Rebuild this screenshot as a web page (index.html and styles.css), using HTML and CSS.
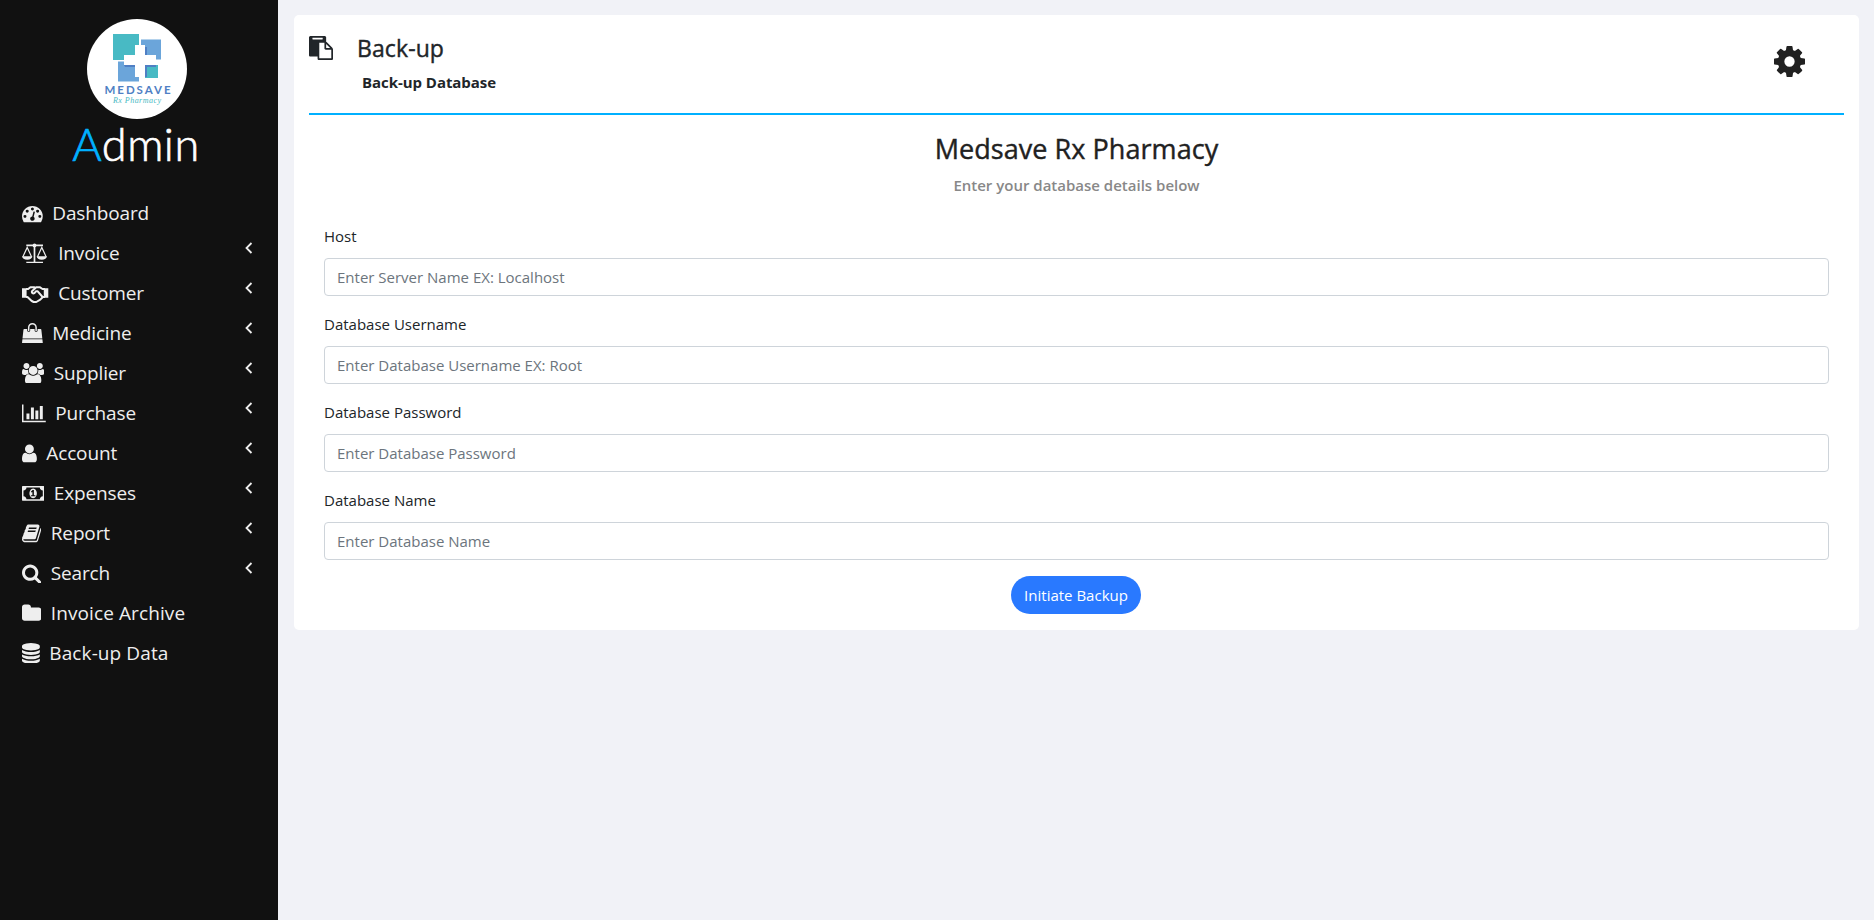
FILE: index.html
```html
<!DOCTYPE html>
<html lang="en">
<head>
<meta charset="utf-8">
<title>Back-up</title>
<link rel="stylesheet" href="styles.css">
</head>
<body>
<div class="app">
  <nav class="sidebar">
    <div class="brand">
      <svg class="logo" viewBox="0 0 100 100">
        <circle cx="50" cy="50" r="50" fill="#fff"/>
        <path fill="#48bac4" d="M26 15h26v26H26zM58 46h13v13H58z"/>
        <path fill="#6ba5da" d="M54 20.500h20v20H54zM31 42.500h21v20H31z"/>
        <path fill="#4f7fc4" d="M48 28h12v10h-2zM37 46h15v2H38zM58 46h11v2H60v10h-2z"/>
        <path fill="#fff" d="M48 26h10v10h11v10H58v12H48V46H37V36h11z"/>
        <text class="logo-name" x="17.500" y="74.500" textLength="66">MEDSAVE</text>
        <text class="logo-sub" x="26" y="84" textLength="48">Rx Pharmacy</text>
      </svg>
      <h1 class="role"><span class="role-initial">A</span>dmin</h1>
    </div>
    <ul class="menu">
      <li class="item"><svg class="icon" viewBox="0 0 1792 1792"><path d="M384 1152q0-53-37.500-90.500t-90.500-37.500-90.500 37.500-37.500 90.500 37.500 90.500 90.500 37.500 90.500-37.500 37.500-90.500zm192-448q0-53-37.500-90.500t-90.500-37.500-90.500 37.500-37.500 90.500 37.500 90.500 90.500 37.500 90.500-37.500 37.500-90.500zm428 481l101-382q6-26-7.500-48.500t-38.500-29.500-48 6.500-30 39.500l-101 382q-60 5-107 43.500t-63 98.500q-20 77 20 146t117 89 146-20 89-117q16-60-6-117t-72-91zm660-33q0-53-37.500-90.500t-90.500-37.500-90.500 37.500-37.500 90.500 37.500 90.500 90.500 37.500 90.500-37.500 37.500-90.500zm-640-640q0-53-37.500-90.500t-90.500-37.500-90.500 37.500-37.500 90.500 37.500 90.500 90.500 37.500 90.500-37.500 37.500-90.500zm448 192q0-53-37.500-90.500t-90.500-37.500-90.500 37.500-37.500 90.500 37.500 90.500 90.500 37.500 90.500-37.500 37.500-90.500zm320 448q0 261-141 483-19 29-54 29h-1402q-35 0-54-29-141-221-141-483 0-182 71-348t191-286 286-191 348-71 348 71 286 191 191 286 71 348z"/></svg><span>Dashboard</span></li>
      <li class="item"><svg class="icon" viewBox="0 0 26.700 20.800"><g fill="none" stroke="#eee" stroke-width="1.700"><path d="M4.300 2.400H21M12.500 2v17.500M4.300 19.600H21"/><path stroke-width="1.200" d="M.9 13.700 5.200 4.500l4.300 9.200M15.500 13.700l4.300-9.200 4.300 9.200"/></g><circle cx="12.500" cy="2.400" r="1.900"/><path d="M0 13.300h10.400q-.6 3.400-5.200 3.400T0 13.300zM14.600 13.300H25q-.6 3.400-5.200 3.400t-5.200-3.400z"/></svg><span>Invoice</span><svg class="caret" viewBox="0 0 8 12"><path d="M6.500 1 1.500 6l5 5"/></svg></li>
      <li class="item"><svg class="icon" viewBox="0 0 26.700 20.800"><path d="M0 5.200h4.600v9.500H0zM21.800 5.200h4.500v9.500h-4.500z"/><g fill="none" stroke="#eee" stroke-width="2" stroke-linejoin="round"><path d="M4 6h2.200l2.200-1.800h4l1 .8M4 14h1.500l4.200 4 2 1h2.600l4-2.400 2.500-2.600H23M23 6h-2.500l-2.800-1.800h-3.500L10 8.200q-.6 1.600 1 2.200 1.600.2 3-2.200h1.500l4.700 5.300"/></g></svg><span>Customer</span><svg class="caret" viewBox="0 0 8 12"><path d="M6.500 1 1.500 6l5 5"/></svg></li>
      <li class="item"><svg class="icon" viewBox="0 0 1792 1792"><path d="M1757 1408l35 313q3 28-16 50-19 21-48 21h-1664q-29 0-48-21-19-22-16-50l35-313h1722zm-93-839l86 775h-1708l86-775q3-24 21-40.500t43-16.500h256v128q0 53 37.500 90.500t90.500 37.500 90.500-37.500 37.500-90.500v-128h384v128q0 53 37.500 90.500t90.500 37.500 90.500-37.500 37.500-90.500v-128h256q25 0 43 16.500t21 40.500zm-384-185v256q0 26-19 45t-45 19-45-19-19-45v-256q0-106-75-181t-181-75-181 75-75 181v256q0 26-19 45t-45 19-45-19-19-45v-256q0-159 112.500-271.500t271.500-112.500 271.500 112.500 112.500 271.500z"/></svg><span>Medicine</span><svg class="caret" viewBox="0 0 8 12"><path d="M6.500 1 1.500 6l5 5"/></svg></li>
      <li class="item"><svg class="icon" viewBox="0 0 1920 1792"><path d="M593 896q-162 5-265 128h-134q-82 0-138-40.500t-56-118.500q0-353 124-353 6 0 43.500 21t97.500 42.500 119 21.500q67 0 133-23-5 37-5 66 0 139 81 256zm1071 637q0 120-73 189.500t-194 69.500h-874q-121 0-194-69.500t-73-189.500q0-53 3.500-103.500t14-109 26.500-108.500 43-97.500 62-81 85.500-53.500 111.500-20q10 0 43 21.500t73 48 107 48 135 21.500 135-21.500 107-48 73-48 43-21.500q61 0 111.500 20t85.500 53.500 62 81 43 97.500 26.500 108.500 14 109 3.500 103.500zm-1024-1277q0 106-75 181t-181 75-181-75-75-181 75-181 181-75 181 75 75 181zm704 384q0 159-112.500 271.500t-271.500 112.500-271.500-112.500-112.500-271.500 112.500-271.500 271.500-112.500 271.500 112.500 112.500 271.500zm576 225q0 78-56 118.500t-138 40.500h-134q-103-123-265-128 81-117 81-256 0-29-5-66 66 23 133 23 59 0 119-21.500t97.500-42.500 43.500-21q124 0 124 353zm-128-609q0 106-75 181t-181 75-181-75-75-181 75-181 181-75 181 75 75 181z"/></svg><span>Supplier</span><svg class="caret" viewBox="0 0 8 12"><path d="M6.500 1 1.500 6l5 5"/></svg></li>
      <li class="item"><svg class="icon" viewBox="0 0 2048 1792"><path d="M640 896v512h-256v-512h256zm384-512v1024h-256v-1024h256zm1024 1152v128h-2048v-1536h128v1408h1920zm-640-896v768h-256v-768h256zm384-384v1152h-256v-1152h256z"/></svg><span>Purchase</span><svg class="caret" viewBox="0 0 8 12"><path d="M6.500 1 1.500 6l5 5"/></svg></li>
      <li class="item"><svg class="icon" viewBox="256 0 1280 1792"><path d="M1536 1399q0 109-62.500 187t-150.500 78h-854q-88 0-150.500-78t-62.500-187q0-85 8.500-160.500t31.500-152 58.500-131 94-89 134.500-34.500q131 128 313 128t313-128q76 0 134.500 34.500t94 89 58.500 131 31.500 152 8.500 160.500zm-256-887q0 159-112.500 271.500t-271.500 112.500-271.500-112.500-112.500-271.500 112.500-271.500 271.500-112.500 271.500 112.500 112.500 271.500z"/></svg><span>Account</span><svg class="caret" viewBox="0 0 8 12"><path d="M6.500 1 1.500 6l5 5"/></svg></li>
      <li class="item"><svg class="icon" viewBox="0 0 1920 1792"><path d="M768 1152h384v-96h-128v-448h-114l-148 137 77 80q42-37 55-57h2v288h-128v96zm512-256q0 70-21 142t-59.500 134-101.500 101-138 39-138-39-101.500-101-59.500-134-21-142 21-142 59.500-134 101.500-101 138-39 138 39 101.500 101 59.500 134 21 142zm512 256v-512q-106 0-181-75t-75-181h-1152q0 106-75 181t-181 75v512q106 0 181 75t75 181h1152q0-106 75-181t181-75zm128-832v1152q0 26-19 45t-45 19h-1792q-26 0-45-19t-19-45v-1152q0-26 19-45t45-19h1792q26 0 45 19t19 45z"/></svg><span>Expenses</span><svg class="caret" viewBox="0 0 8 12"><path d="M6.500 1 1.500 6l5 5"/></svg></li>
      <li class="item"><svg class="icon" viewBox="64 0 1664 1792"><path d="M1703 478q40 57 18 129l-275 906q-19 64-76.500 107.500t-122.500 43.500h-923q-77 0-148.500-53.500t-99.500-131.500q-24-67-2-127 0-4 3-27t4-37q1-8-3-21.500t-3-19.500q2-11 8-21t16.500-23.500 16.500-23.500q23-38 45-91.500t30-91.500q3-10 .5-30t-.5-28q3-11 17-28t17-23q21-36 42-92t25-90q1-9-2.500-32t.5-28q4-13 22-30.500t22-22.500q19-26 42.500-84.500t27.500-96.500q1-8-3-25.500t-2-26.500q2-8 9-18t18-23 17-21q8-12 16.500-30.500t15-35 16-36 19.500-32 26.500-23.500 36-11.500 47.500 5.500l-1 3q38-9 51-9h761q74 0 114 56t18 130l-274 906q-36 119-71.500 153.500t-128.500 34.500h-869q-27 0-38 15-11 16-1 43 24 70 144 70h923q29 0 56-15.500t35-41.500l300-987q7-22 5-57 38 15 59 43zm-1064 2q-4 13 2 22.500t20 9.500h608q13 0 25.500-9.500t16.500-22.500l21-64q4-13-2-22.500t-20-9.500h-608q-13 0-25.500 9.500t-16.500 22.500zm-83 256q-4 13 2 22.500t20 9.500h608q13 0 25.500-9.500t16.500-22.500l21-64q4-13-2-22.500t-20-9.500h-608q-13 0-25.500 9.500t-16.500 22.500z"/></svg><span>Report</span><svg class="caret" viewBox="0 0 8 12"><path d="M6.500 1 1.500 6l5 5"/></svg></li>
      <li class="item"><svg class="icon" viewBox="64 0 1664 1792"><path d="M1216 832q0-185-131.500-316.500t-316.500-131.500-316.500 131.500-131.500 316.500 131.500 316.500 316.500 131.500 316.500-131.500 131.500-316.500zm512 832q0 52-38 90t-90 38q-54 0-90-38l-343-342q-179 124-399 124-143 0-273.500-55.500t-225-150-150-225-55.500-273.500 55.500-273.500 150-225 225-150 273.500-55.500 273.500 55.500 225 150 150 225 55.500 273.500q0 220-124 399l343 343q37 37 37 90z"/></svg><span>Search</span><svg class="caret" viewBox="0 0 8 12"><path d="M6.500 1 1.500 6l5 5"/></svg></li>
      <li class="item"><svg class="icon" viewBox="64 0 1664 1792"><path d="M1728 608v704q0 92-66 158t-158 66h-1216q-92 0-158-66t-66-158v-960q0-92 66-158t158-66h320q92 0 158 66t66 158v32h672q92 0 158 66t66 158z"/></svg><span class="wide">Invoice Archive</span></li>
      <li class="item"><svg class="icon" viewBox="128 0 1536 1792"><path d="M896 768q237 0 443-43t325-127v170q0 69-103 128t-280 93.500-385 34.500-385-34.500-280-93.500-103-128v-170q119 84 325 127t443 43zm0 768q237 0 443-43t325-127v170q0 69-103 128t-280 93.500-385 34.500-385-34.500-280-93.500-103-128v-170q119 84 325 127t443 43zm0-384q237 0 443-43t325-127v170q0 69-103 128t-280 93.500-385 34.500-385-34.500-280-93.500-103-128v-170q119 84 325 127t443 43zm0-1152q208 0 385 34.500t280 93.500 103 128v128q0 69-103 128t-280 93.500-385 34.500-385-34.500-280-93.500-103-128v-128q0-69 103-128t280-93.500 385-34.500z"/></svg><span class="wide">Back-up Data</span></li>
    </ul>
  </nav>
  <main class="content">
    <section class="card">
      <header class="card-head">
        <svg class="paste" viewBox="0 0 1792 1792"><path d="M768 1664h896v-640h-416q-40 0-68-28t-28-68v-416h-384v1152zm256-1440v-64q0-13-9.500-22.500t-22.500-9.500h-704q-13 0-22.500 9.500t-9.500 22.500v64q0 13 9.500 22.500t22.500 9.500h704q13 0 22.500-9.500t9.500-22.500zm256 672h299l-299-299v299zm512 128v672q0 40-28 68t-68 28h-960q-40 0-68-28t-28-68v-160h-544q-40 0-68-28t-28-68v-1344q0-40 28-68t68-28h1088q40 0 68 28t28 68v328q21 13 36 28l408 408q28 28 48 76t20 88z"/></svg>
        <div class="head-text">
          <h2 class="title">Back-up</h2>
          <p class="subtitle">Back-up Database</p>
        </div>
        <svg class="cog" viewBox="128 128 1536 1536"><path d="M1152 896q0-106-75-181t-181-75-181 75-75 181 75 181 181 75 181-75 75-181zm512-109v222q0 12-8 23t-20 13l-185 28q-19 54-39 91 35 50 107 138 10 12 10 25t-9 23q-27 37-99 108t-94 71q-12 0-26-9l-138-108q-44 23-91 38-16 136-29 186-7 28-36 28h-222q-14 0-24.500-8.500t-11.500-21.500l-28-184q-49-16-90-37l-141 107q-10 9-25 9-14 0-25-11-126-114-165-168-7-10-7-23 0-12 8-23 15-21 51-66.500t54-70.500q-27-50-41-99l-183-27q-13-2-21-12.500t-8-23.500v-222q0-12 8-23t19-13l186-28q14-46 39-92-40-57-107-138-10-12-10-24 0-10 9-23 26-36 98.500-107.500t94.500-71.500q13 0 26 10l138 107q44-23 91-38 16-136 29-186 7-28 36-28h222q14 0 24.500 8.500t11.500 21.500l28 184q49 16 90 37l142-107q9-9 24-9 13 0 25 10 129 119 165 170 7 8 7 22 0 12-8 23-15 21-51 66.500t-54 70.500q26 50 41 98l183 28q13 2 21 12.500t8 23.500z"/></svg>
      </header>
      <h3 class="form-title">Medsave Rx Pharmacy</h3>
      <p class="form-hint">Enter your database details below</p>
      <form class="form">
        <label class="field"><span class="label">Host</span><input class="input" type="text" placeholder="Enter Server Name EX: Localhost"></label>
        <label class="field"><span class="label">Database Username</span><input class="input" type="text" placeholder="Enter Database Username EX: Root"></label>
        <label class="field"><span class="label">Database Password</span><input class="input" type="password" placeholder="Enter Database Password"></label>
        <label class="field"><span class="label">Database Name</span><input class="input" type="text" placeholder="Enter Database Name"></label>
        <button class="submit" type="button">Initiate Backup</button>
      </form>
    </section>
  </main>
</div>
</body>
</html>
```
FILE: styles.css
```css
* { box-sizing: border-box; }
body { margin: 0; font-family: "Open Sans", "Noto Sans", sans-serif; font-size: 15px; line-height: 24px; color: #212529; background: #f1f2f7; }
h1, h2, h3, p, ul { margin: 0; padding: 0; }
.app { display: flex; min-height: 920px; }
.sidebar { width: 278px; flex: none; background: #111; color: #eee; }
.brand { display: flex; flex-direction: column; align-items: center; height: 193px; padding: 19px 4px 0 0; }
.logo { width: 100px; height: 100px; flex: none; }
.logo-name { font: 700 11.500px Lato, sans-serif; fill: #4f7fc4; }
.logo-sub { font: italic 8px "Liberation Serif", serif; fill: #48bac4; }
.role { font: 300 45px/50px Lato, sans-serif; color: #fff; letter-spacing: .5px; padding-right: 2px; -webkit-text-stroke: .7px; }
.role-initial { color: #00b0ff; }
.menu { list-style: none; }
.item { display: flex; align-items: center; height: 40px; padding: 0 25px 0 22px; font-size: 19px; letter-spacing: -.15px; }
.item span { margin-left: 9.500px; }
.item .wide { letter-spacing: .1px; }
.icon { height: 20.800px; width: auto; fill: #eee; flex: none; }
.caret { width: 8px; height: 12px; margin: 0 0 11px auto; fill: none; stroke: #eee; stroke-width: 1.800; }
.content { flex: 1; padding: 15px 15px 0 16px; }
.card { height: 615px; padding: 0 15px; background: #fff; border-radius: 5px; }
.card-head { display: flex; height: 100px; border-bottom: 2px solid #00b0ff; padding-top: 18px; }
.paste { width: 24px; height: 24px; margin: 3px 24px 0 0; fill: #212529; }
.title { font-size: 23px; font-weight: 500; line-height: 30px; letter-spacing: .1px; -webkit-text-stroke: .4px; }
.subtitle { margin: 7px 0 0 5px; font-weight: 700; line-height: 24px; letter-spacing: -.05px; }
.cog { width: 31px; height: 31px; margin: 13px 39px 0 auto; fill: #212121; }
.form-title { margin-top: 15px; text-align: center; font-size: 27px; font-weight: 500; line-height: 38px; color: #212121; -webkit-text-stroke: .4px; letter-spacing: .05px; }
.form-hint { margin-top: 5px; text-align: center; font-weight: 600; color: #888; }
.form { display: flex; flex-direction: column; padding: 27px 15px 0; }
.field { display: flex; flex-direction: column; gap: 10px; margin-bottom: 16px; }
.input { height: 38px; padding: 0 12px; border: 1px solid #ced4da; border-radius: 4px; font: inherit; background: #fff; }
.input::placeholder { color: #6c757d; opacity: 1; }
.submit { align-self: center; width: 130px; height: 38px; margin-right: 1px; padding: 0; border: 0; border-radius: 19px; background: #2979ff; color: #fff; font: inherit; }
```
